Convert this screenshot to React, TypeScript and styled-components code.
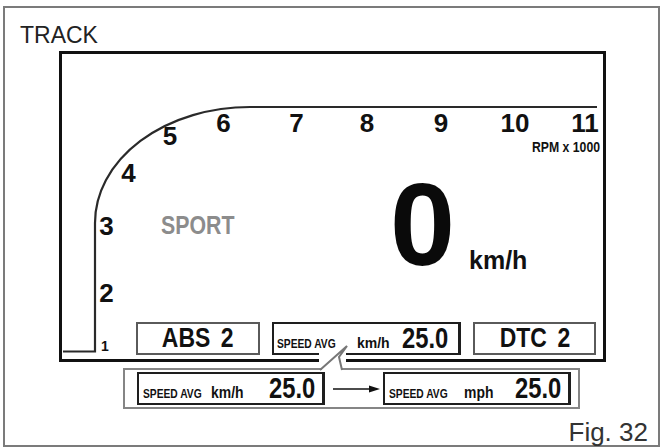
import React from 'react';
import styled, { createGlobalStyle } from 'styled-components';

const SANS = `"Liberation Sans", Arial, Helvetica, sans-serif`;
// condensed dashboard lettering: Arial-width glyphs squeezed to narrow proportions
const SQUEEZE = 0.82;

const GlobalStyle = createGlobalStyle`
  html, body { margin: 0; padding: 0; background: #fff; }
  body { width: 662px; height: 448px; overflow: hidden; font-family: ${SANS}; color: #111; }
  *, *::before, *::after { box-sizing: border-box; }
`;

const Page = styled.div`
  width: 662px;
  height: 448px;
  padding: 6px 0 0 3px;
`;

const Frame = styled.div`
  width: 657px;
  height: 441px;
  border: 2px solid #7b7b7b;
  display: flex;
  flex-direction: column;
  & > * { flex-shrink: 0; }
`;

const Title = styled.div`
  height: 43px;
  padding: 12px 0 0 15px;
  font: 400 23px/30px ${SANS};
  color: #222;
`;

const Display = styled.div`
  position: relative;
  margin-left: 54px;
  width: 547px;
  height: 311px;
  border: 3px solid #111;
  display: flex;
  flex-direction: column;
`;

const Gauge = styled.svg`
  position: absolute;
  inset: 0;
  width: 100%;
  height: 100%;
  pointer-events: none;
`;

const Sweep = styled.path`
  fill: none;
  stroke: #2a2a2a;
  stroke-width: 2.2;
`;

const Tick = styled.text<{ $size: number }>`
  font-family: ${SANS};
  font-weight: 700;
  font-size: ${(p) => p.$size}px;
  fill: #111;
`;

/* Narrow lettering: a fixed-width slot holding horizontally squeezed glyphs */
const Slot = styled.span<{ $w?: number; $center?: boolean }>`
  display: inline-block;
  ${(p) => (p.$w ? `width: ${p.$w}px;` : '')}
  white-space: nowrap;
  text-align: ${(p) => (p.$center ? 'center' : 'left')};
`;

const Squash = styled.span<{ $center?: boolean }>`
  display: inline-block;
  transform: scaleX(${SQUEEZE});
  transform-origin: ${(p) => (p.$center ? '50%' : '0')} 50%;
`;

function Narrow({ w, center, children }: { w?: number; center?: boolean; children: React.ReactNode }) {
  return (
    <Slot $w={w} $center={center}>
      <Squash $center={center}>{children}</Squash>
    </Slot>
  );
}

const ReadoutRow = styled.div`
  margin-top: 126px;
  height: 90px;
  display: flex;
  align-items: flex-end;
  padding-left: 99px;
`;

const Mode = styled.div`
  width: 229px;
  align-self: center;
  font: 700 26px/26px ${SANS};
  color: #8c8c8c;
`;

const SpeedValue = styled.div`
  width: 65px;
  font: 700 117px/90px ${SANS};
  color: #0a0a0a;
`;

const SpeedUnit = styled.div`
  margin-left: 14px;
  font: 700 25px/20px ${SANS};
`;

const BottomRow = styled.div`
  margin-top: auto;
  padding: 0 0 4px 74px;
  display: flex;
  gap: 12px;
`;

const ModeBox = styled.div<{ $w: number }>`
  width: ${(p) => p.$w}px;
  height: 33px;
  border: 2px solid #5a5a5a;
  text-align: center;
  font: 700 28px/27px ${SANS};
  word-spacing: 5px;
`;

const ReadoutBox = styled.div<{ $w: number; $pad: number }>`
  width: ${(p) => p.$w}px;
  height: 33px;
  border: 2px solid #1e1e1e;
  border-right-width: 3px;
  display: flex;
  align-items: baseline;
  padding-left: ${(p) => p.$pad}px;
`;

const Tag = styled.span`
  font: 700 12.5px/14px ${SANS};
`;

const Unit = styled.span<{ $gap: number; $size: number }>`
  margin-left: ${(p) => p.$gap}px;
  font: 700 ${(p) => p.$size}px/18px ${SANS};
`;

const Value = styled.span<{ $gap: number }>`
  margin-left: ${(p) => p.$gap}px;
  font: 700 29px/29px ${SANS};
`;

const Callout = styled.div`
  position: relative;
  margin: 6px 0 0 118px;
  width: 457px;
  height: 41px;
  border: 2px solid #858585;
  display: flex;
  align-items: center;
  padding-left: 12px;
`;

const Pointer = styled.svg`
  position: absolute;
  left: 190px;
  top: -26px;
  width: 35px;
  height: 30px;
  overflow: visible;
`;

const Arrow = styled.svg`
  width: 48px;
  height: 12px;
  margin: 0 2px 0 8px;
`;

const Caption = styled.div`
  align-self: flex-end;
  margin: 10px 10px 0 0;
  font: 400 26px/26px ${SANS};
  color: #333;
`;

type TickDef = { label: string; x: number; y: number; size?: number };

const ticks: TickDef[] = [
  { label: '1', x: 43, y: 297, size: 14 },
  { label: '2', x: 44.5, y: 248 },
  { label: '3', x: 44.5, y: 181 },
  { label: '4', x: 66.5, y: 128 },
  { label: '5', x: 108, y: 91 },
  { label: '6', x: 161.5, y: 78 },
  { label: '7', x: 234.5, y: 78 },
  { label: '8', x: 305, y: 78 },
  { label: '9', x: 379, y: 78 },
  { label: '10', x: 453, y: 78 },
  { label: '11', x: 523, y: 78 },
];

function RevGauge() {
  return (
    <Gauge viewBox="0 0 541 305">
      <Sweep d="M 1 297.5 H 33 V 169 A 155 116 0 0 1 188 53 H 535" />
      {ticks.map((t) => (
        <Tick key={t.label} $size={t.size ?? 26} x={t.x} y={t.y} textAnchor="middle">
          {t.label}
        </Tick>
      ))}
      <Tick $size={14} x={0} y={0} transform="translate(470 98) scale(0.875 1)">
        RPM x 1000
      </Tick>
    </Gauge>
  );
}

type AvgProps = { w: number; pad: number; unit: string; unitSize: number; unitW?: number; gaps: [number, number] };

function AverageReadout({ w, pad, unit, unitSize, unitW, gaps }: AvgProps) {
  return (
    <ReadoutBox $w={w} $pad={pad}>
      <Tag>
        <Narrow w={60}>SPEED AVG</Narrow>
      </Tag>
      <Unit $gap={gaps[0]} $size={unitSize}>
        {unitW ? <Narrow w={unitW}>{unit}</Narrow> : unit}
      </Unit>
      <Value $gap={gaps[1]}>
        <Narrow w={47}>25.0</Narrow>
      </Value>
    </ReadoutBox>
  );
}

export default function App() {
  return (
    <>
      <GlobalStyle />
      <Page>
        <Frame>
          <Title>TRACK</Title>
          <Display>
            <RevGauge />
            <ReadoutRow>
              <Mode>
                <Narrow>SPORT</Narrow>
              </Mode>
              <SpeedValue>0</SpeedValue>
              <SpeedUnit>km/h</SpeedUnit>
            </ReadoutRow>
            <BottomRow>
              <ModeBox $w={124}>
                <Narrow center>ABS 2</Narrow>
              </ModeBox>
              <AverageReadout w={189} pad={3} unit="km/h" unitSize={14} gaps={[20, 12]} />
              <ModeBox $w={123}>
                <Narrow center>DTC 2</Narrow>
              </ModeBox>
            </BottomRow>
          </Display>
          <Callout>
            <Pointer viewBox="0 0 35 30">
              <rect x={4} y={8} width={27} height={12} fill="#fff" />
              <rect x={7} y={23.5} width={19} height={3.5} fill="#fff" />
              <polyline
                points="5,26 32,2 24,13 27,26"
                fill="none"
                stroke="#777"
                strokeWidth={2}
              />
            </Pointer>
            <AverageReadout w={188} pad={4} unit="km/h" unitSize={17} unitW={33} gaps={[8, 25]} />
            <Arrow viewBox="0 0 48 12">
              <line x1={0} y1={6} x2={38} y2={6} stroke="#111" strokeWidth={1.5} />
              <polygon points="36,2.5 47,6 36,9.5" fill="#111" />
            </Arrow>
            <AverageReadout w={188} pad={4} unit="mph" unitSize={17} unitW={30} gaps={[15, 21]} />
          </Callout>
          <Caption>Fig. 32</Caption>
        </Frame>
      </Page>
    </>
  );
}
